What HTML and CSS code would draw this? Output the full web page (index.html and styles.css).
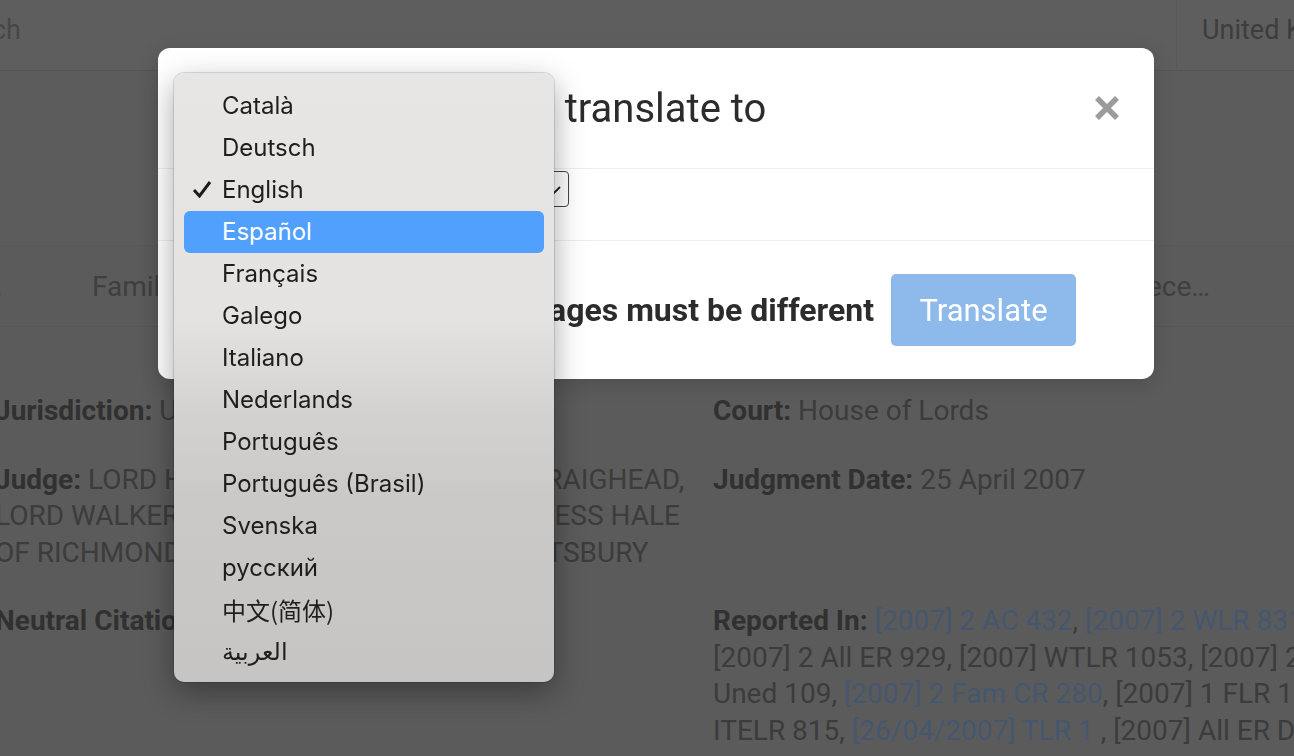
FILE: index.html
```html
<!DOCTYPE html>
<html lang="en">
<head>
    <meta charset="UTF-8">
    <meta name="viewport" content="width=device-width, initial-scale=1.0">
    <title>Judgment - Translate</title>
    <link rel="stylesheet" href="styles.css">
</head>
<body>
    <div class="page">
        <header class="topbar">
            <div class="search">Search</div>
            <div class="country">United Kingdom</div>
        </header>
        <div class="band"></div>
        <nav class="tabs">
            <div class="tab">Case summary and overview</div>
            <div class="tab">Family Law</div>
            <div class="tab">Trusts</div>
            <div class="tab">Property</div>
            <div class="tab">Cohabitation</div>
            <div class="tab">Citing cases</div>
            <div class="tab tab-last">Precedents</div>
        </nav>
        <section class="details">
            <div class="field"><b>Jurisdiction:</b> United Kingdom</div>
            <div class="field"><b>Court:</b> House of Lords</div>
            <div class="field"><b>Judge:</b> LORD HOFFMANN, LORD HOPE OF CRAIGHEAD, LORD WALKER OF GESTINGTHORPE, BARONESS HALE OF RICHMOND, LORD NEUBERGER OF ABBOTSBURY</div>
            <div class="field"><b>Judgment Date:</b> 25 April 2007</div>
            <div class="field"><b>Neutral Citation:</b> [2007] UKHL 17</div>
            <div class="field cites">
                <b>Reported In:</b> <a href="#">[2007] 2 AC 432</a>, <a href="#">[2007] 2 WLR 831</a>,<br>
                [2007] 2 All ER 929, [2007] WTLR 1053, [2007] 2 P &amp; CR DG11,<br>
                Uned 109, <a href="#">[2007] 2 Fam CR 280</a>, [2007] 1 FLR 1858, [2007] 9<br>
                ITELR 815, <a href="#">[26/04/2007] TLR 1</a> , [2007] All ER D 208
            </div>
        </section>
    </div>

    <div class="backdrop"></div>

    <div class="modal">
        <div class="modal-header">
            <h2 class="modal-title">Select language to translate to</h2>
            <button class="close" aria-label="Close">
                <svg width="26" height="26" viewBox="0 0 26 26"><path d="M3 3L23 23M23 3L3 23" stroke="#9b9b9b" stroke-width="5.5" stroke-linecap="butt"/></svg>
            </button>
        </div>
        <div class="modal-body">
            <div class="select">
                <span>English</span>
                <svg class="chevron" width="16" height="9" viewBox="0 0 16 9"><path d="M1 1L8 8L15 1" fill="none" stroke="#222" stroke-width="1.8"/></svg>
            </div>
        </div>
        <div class="modal-footer">
            <span class="warning">Source and target languages must be different</span>
            <button class="btn-translate" disabled>Translate</button>
        </div>
    </div>

    <ul class="menu">
        <li>Català</li>
        <li>Deutsch</li>
        <li class="checked">
            <svg class="check" width="20" height="18" viewBox="0 0 20 18"><path d="M2 10L7.5 16L18 2" fill="none" stroke="#1c1c1c" stroke-width="3"/></svg>
            English
        </li>
        <li class="active">Español</li>
        <li>Français</li>
        <li>Galego</li>
        <li>Italiano</li>
        <li>Nederlands</li>
        <li>Português</li>
        <li>Português (Brasil)</li>
        <li>Svenska</li>
        <li>русский</li>
        <li class="cjk">中文(简体)</li>
        <li>العربية</li>
    </ul>
</body>
</html>
```

FILE: styles.css
```css
body {
    margin: 0;
    width: 1294px;
    height: 756px;
    overflow: hidden;
    background-color: #b7b7b7;
    font-family: Roboto, "Liberation Sans", sans-serif;
    color: #787878;
}
.page {
    width: 1294px;
}
.topbar {
    height: 70px;
    display: flex;
    justify-content: space-between;
    background-color: #bdbdbd;
    border-bottom: 1px solid #ababab;
    font-size: 27px;
}
.search {
    margin-left: -62px;
    padding-top: 14px;
    color: #8e8e8e;
}
.country {
    width: 92px;
    padding-left: 25px;
    padding-top: 14px;
    border-left: 1px solid #b2b2b2;
    white-space: nowrap;
    overflow: hidden;
    color: #7a7a7a;
}
.band {
    height: 174px;
    background-color: #b9b9b9;
}
.tabs {
    display: flex;
    height: 80px;
    align-items: center;
    margin-left: -116px;
    border-top: 1px solid #b0b0b0;
    border-bottom: 1px solid #adadad;
    font-size: 28px;
    color: #7e7e7e;
}
.tab {
    flex: 0 0 131px;
    margin-right: 77px;
    white-space: nowrap;
    overflow: hidden;
    text-overflow: ellipsis;
}
.tab-last {
    flex-basis: 90px;
    margin-left: -12px;
}
.details {
    display: grid;
    grid-template-columns: 718px 620px;
    row-gap: 32px;
    margin-left: -5px;
    padding-top: 66px;
    font-size: 28px;
    line-height: 36.5px;
}
.field {
    padding-right: 28px;
}
.field b {
    color: #626262;
}
.cites {
    white-space: nowrap;
    padding-right: 0;
}
.cites a {
    color: #8aaedc;
    text-decoration: none;
}
.backdrop {
    position: fixed;
    inset: 0;
    background-color: rgba(0, 0, 0, 0.5);
}

.modal {
    position: absolute;
    left: 158px;
    top: 48px;
    width: 996px;
    background-color: #fff;
    border-radius: 12px;
    box-shadow: 0 4px 20px rgba(0, 0, 0, 0.15);
    color: #2c2c2c;
}
.modal-header {
    height: 120px;
    display: flex;
    align-items: center;
    justify-content: space-between;
    padding: 0 34px 0 32px;
    border-bottom: 1px solid #efefef;
}
.modal-title {
    margin: 1px 0 0 36px;
    font-size: 40px;
    font-weight: 400;
}
.close {
    border: 0;
    padding: 0;
    background: none;
    display: flex;
}
.modal-body {
    padding: 2px 32px 33px;
    border-bottom: 1px solid #efefef;
}
.select {
    width: 363px;
    height: 34px;
    display: flex;
    align-items: center;
    justify-content: space-between;
    padding: 0 7px 0 7px;
    box-sizing: content-box;
    border: 1px solid #444;
    border-radius: 4px;
    font-size: 22px;
}
.chevron {
    margin-top: 3px;
}
.modal-footer {
    display: flex;
    justify-content: flex-end;
    align-items: center;
    gap: 17px;
    padding: 33px 78px 33px 32px;
}
.warning {
    font-size: 32px;
    font-weight: 700;
}
.btn-translate {
    width: 185px;
    height: 72px;
    border: 0;
    border-radius: 5px;
    background-color: #8db9eb;
    color: #fff;
    font-family: Roboto, sans-serif;
    font-size: 31px;
}

.menu {
    position: absolute;
    left: 174px;
    top: 73px;
    width: 360px;
    margin: 0;
    padding: 12px 10px 9px;
    list-style: none;
    border-radius: 10px;
    background: linear-gradient(#e7e6e5 0%, #e4e3e2 40%, #d3d2d1 56%, #cac9c8 70%, #c6c5c4 100%);
    box-shadow: 0 0 0 1px rgba(0, 0, 0, 0.12), 0 10px 30px rgba(0, 0, 0, 0.35);
    font-family: Inter, "Noto Sans", "Noto Sans CJK SC", "DejaVu Sans", sans-serif;
    font-size: 24px;
    color: #1e1e1e;
}
.menu li {
    position: relative;
    height: 42px;
    line-height: 42px;
    padding-left: 38px;
    border-radius: 6px;
}
.menu li.active {
    background-color: #51a0fd;
    color: #fff;
}
.menu .cjk {
    font-family: "Noto Sans CJK SC", sans-serif;
}
.check {
    position: absolute;
    left: 8px;
    top: 11px;
}
```
